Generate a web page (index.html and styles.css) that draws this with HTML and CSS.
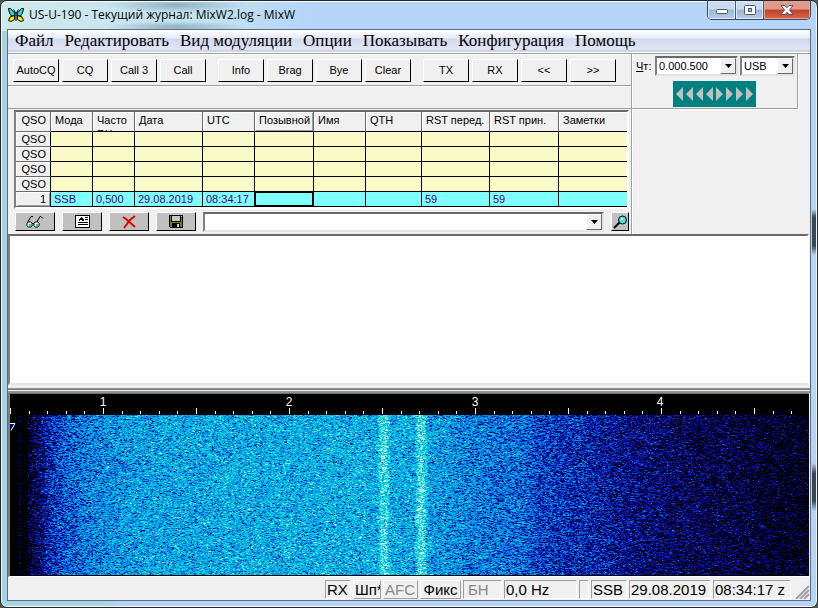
FILE: index.html
```html
<!DOCTYPE html>
<html lang="ru">
<head>
<meta charset="utf-8">
<title>US-U-190 - Текущий журнал: MixW2.log - MixW</title>
<link rel="stylesheet" href="styles.css">
</head>
<body>
<div class="window">
  <header class="titlebar">
    <svg class="app-icon" width="16" height="16" viewBox="0 0 16 16" aria-hidden="true">
      <path d="M.5 1.500h2l4 4.500.5 3H3.500L1.500 6zM15.500 1.500h-2L9.500 6 9 9h3.500l2-3z" fill="#1fe0e0" stroke="#000"/>
      <path d="M6.500 8.500l-4.500 1.500L.5 13.500 3 14.500l3.500-2zM9.500 8.500l4.500 1.500 1.500 3.500-2.500 1-3.500-2z" fill="#f8f000" stroke="#000"/>
      <path d="M5.500 2.500L8 6.500l2.500-4M8 6v8" fill="none" stroke="#000"/>
    </svg>
    <h1 class="caption">US-U-190 - Текущий журнал: MixW2.log - MixW</h1>
    <div class="window-buttons">
      <button class="wb" aria-label="Свернуть"><svg width="14" height="10"><rect x="1.5" y="4.500" width="11" height="4" rx="1" fill="#fff" stroke="#535666"/></svg></button>
      <button class="wb" aria-label="Развернуть"><svg width="14" height="10"><rect x="1.500" y=".5" width="11" height="9" rx="1" fill="#fff" stroke="#535666"/><rect x="5.500" y="3.500" width="3" height="3" fill="#9fb4cf" stroke="#535666"/></svg></button>
      <button class="wb wb-close" aria-label="Закрыть"><svg width="14" height="10"><path d="M1 .5h4l2 2.200 2-2.200h4L9.500 5l3.500 4.500H9L7 7.300 5 9.500H1L4.500 5z" fill="#fff" stroke="#535666"/></svg></button>
    </div>
  </header>

  <main class="client">
    <nav class="menu">
      <a href="#file">Файл</a><a href="#edit">Редактировать</a><a href="#mode">Вид модуляции</a><a href="#options">Опции</a><a href="#view">Показывать</a><a href="#config">Конфигурация</a><a href="#help">Помощь</a>
    </nav>

    <div class="top">
      <section class="left">
        <div class="macros">
          <div class="group"><button>AutoCQ</button><button>CQ</button><button>Call 3</button><button>Call</button></div>
          <div class="group"><button>Info</button><button>Brag</button><button>Bye</button><button>Clear</button></div>
          <div class="group"><button>TX</button><button>RX</button><button>&lt;&lt;</button><button>&gt;&gt;</button></div>
        </div>
        <div class="strip"></div>
        <div class="log">
          <table>
            <colgroup><col class="c-qso"><col class="c-mode"><col class="c-mode"><col class="c-date"><col class="c-utc"><col class="c-call"><col class="c-utc"><col class="c-qth"><col class="c-date"><col class="c-rst"><col></colgroup>
            <thead>
              <tr><th class="no">QSO</th><th>Мода</th><th><div class="clip">Часто<br>RX</div></th><th>Дата</th><th>UTC</th><th class="raised">Позывной</th><th>Имя</th><th>QTH</th><th>RST перед.</th><th>RST прин.</th><th>Заметки</th></tr>
            </thead>
            <tbody>
              <tr><th class="no">QSO</th><td></td><td></td><td></td><td></td><td></td><td></td><td></td><td></td><td></td><td></td></tr>
              <tr><th class="no">QSO</th><td></td><td></td><td></td><td></td><td></td><td></td><td></td><td></td><td></td><td></td></tr>
              <tr><th class="no">QSO</th><td></td><td></td><td></td><td></td><td></td><td></td><td></td><td></td><td></td><td></td></tr>
              <tr><th class="no">QSO</th><td></td><td></td><td></td><td></td><td></td><td></td><td></td><td></td><td></td><td></td></tr>
              <tr class="current"><th class="no raised">1</th><td>SSB</td><td>0,500</td><td>29.08.2019</td><td>08:34:17</td><td class="focus"></td><td></td><td></td><td>59</td><td>59</td><td></td></tr>
            </tbody>
          </table>
        </div>
        <div class="tools">
          <button class="tool" aria-label="Поиск"><svg width="18" height="13" viewBox="0 0 18 13"><path d="M1.500 7.500L5 1.500h2M10.500 7.500L14 1.500h1l2 2" fill="none" stroke="#000"/><path d="M2 7h3l1 1v3l-1 1H2l-1-1V8zM9 7h3l1 1v3l-1 1H9l-1-1V8z" fill="#fff" stroke="#000"/><path d="M3 9h2v2H3zM10 9h2v2h-2z" fill="#00dede"/><path d="M6 8.500h2" stroke="#000"/></svg></button>
          <button class="tool" aria-label="Запись"><svg width="15" height="13" viewBox="0 0 15 13" shape-rendering="crispEdges"><path d="M0 0h15v13H0z" fill="#000"/><path d="M1 1h13v11H1z" fill="#fff"/><path d="M3 6h1V4h1V3h1V2h1v1h1v1h1v2H7V5H5v1zM10 2h3v1h-3zM10 4h3v1h-3zM3 7h10v1H3zM3 9h10v1H3z" fill="#000"/></svg></button>
          <button class="tool" aria-label="Удалить"><svg width="14" height="14" viewBox="0 0 14 14"><path d="M1 2l3 2 9 8M13 1L8 5l-6 8" fill="none" stroke="#e00000" stroke-width="2"/></svg></button>
          <button class="tool" aria-label="Сохранить"><svg width="14" height="13" viewBox="0 0 14 13" shape-rendering="crispEdges"><path d="M0 0h14v13H1l-1-1z" fill="#000"/><path d="M1 1h1v6h10V3h1v9H1z" fill="#808000"/><path d="M3 1h8v5H3z" fill="#c8c8c8"/><path d="M3 8h8v5H3z" fill="#000"/><path d="M8 9h2v3H8z" fill="#d0d0d0"/><path d="M12 1h1v1h-1z" fill="#fff"/></svg></button>
          <div class="combo wide"><input type="text" aria-label="Строка заметок"><button class="drop" aria-label="Список"><svg width="7" height="4"><path d="M0 0h7L3.500 4z"/></svg></button></div>
          <button class="tool find" aria-label="Найти"><svg width="15" height="14" viewBox="0 0 15 14"><path d="M1 13l6-6" stroke="#000" stroke-width="2"/><circle cx="9.500" cy="5" r="4" fill="#3fe4e8" stroke="#000"/><path d="M8 3h2v2H8z" fill="#fff"/></svg></button>
        </div>
      </section>

      <section class="right">
        <div class="tuner">
          <div class="fields">
            <label for="freq"><u>Ч</u>т:</label>
            <div class="combo freq"><select id="freq"><option>0.000.500</option></select><span class="drop"><svg width="7" height="4"><path d="M0 0h7L3.500 4z"/></svg></span></div>
            <div class="combo band"><select aria-label="Модуляция"><option>USB</option></select><span class="drop"><svg width="7" height="4"><path d="M0 0h7L3.500 4z"/></svg></span></div>
          </div>
          <button class="spin" aria-label="Настройка"><svg width="83" height="26" viewBox="0 0 83 26"><path d="M10 6v14L3 13zM20 6v14l-7-7zM30 6v14l-7-7zM40 6v14l-7-7zM43 6v14l7-7zM53 6v14l7-7zM63 6v14l7-7zM73 6v14l7-7z" fill="#c0c0c0"/></svg></button>
        </div>
      </section>
    </div>

    <textarea class="received" aria-label="Принятый текст"></textarea>
    <div class="splitter"></div>

    <section class="spectrum">
      <svg class="ruler" width="100%" height="21">
        <defs>
          <pattern id="ticks" width="186" height="21" patternUnits="userSpaceOnUse">
            <path d="M0 14h1v6H0zM93 14h1v6h-1zM19 17h1v3h-1zM37 17h1v3h-1zM56 17h1v3h-1zM74 17h1v3h-1zM112 17h1v3h-1zM130 17h1v3h-1zM149 17h1v3h-1zM167 17h1v3h-1z" fill="#fff" shape-rendering="crispEdges"/>
          </pattern>
        </defs>
        <rect width="100%" height="21" fill="url(#ticks)"/>
        <text x="93" y="12">1</text><text x="279" y="12">2</text><text x="465" y="12">3</text><text x="650" y="12">4</text>
      </svg>
      <div class="fall">
        <canvas id="waterfall"></canvas>
        <svg class="marker" width="6" height="8"><path d="M0 .5h5L1 7.500" fill="#000090" stroke="#fff"/></svg>
      </div>
    </section>

    <footer class="status">
      <span class="s-rx">RX</span><button class="s-sq">Шп*</button><button class="s-afc off">AFC</button><button class="s-lock">Фикс</button><span class="s-bn off">БН</span><span class="s-hz">0,0 Hz</span><span class="s-gap"></span><span class="s-mode">SSB</span><span class="s-date">29.08.2019</span><span class="s-time">08:34:17 z</span>
      <svg class="grip" width="14" height="14"><path d="M1 14L14 1M5 14l9-9M9 14l5-5" stroke="#a0a0a0" stroke-width="2"/></svg>
    </footer>
  </main>
</div>
<script src="app.js"></script>
</body>
</html>
```
FILE: styles.css
```css
* { box-sizing: border-box; }
body {
  margin: 0;
  background: #4a5a52;
  font: 11px/13px "Liberation Sans", sans-serif;
  color: #000;
}
button, input, select, textarea { font: inherit; color: inherit; margin: 0; border-radius: 0; }
button { padding: 0; }

.window {
  display: flex;
  flex-direction: column;
  min-height: 100vh;
  padding: 0 6px 6px;
  border: 1px solid #22252c;
  border-radius: 7px;
  box-shadow: inset 0 0 0 1px #f4fafd;
  background:
    linear-gradient(transparent 208px, #3a4654 216px, #3a4654 245px, transparent 254px, transparent 462px, #3a4654 472px, #3a4654 500px, transparent 510px) right 0 top 0 / 5px 100% no-repeat,
    radial-gradient(ellipse 70px 8px at 175px 4px, #8fb0c4, transparent) 0 0 / 100% 30px no-repeat,
    radial-gradient(ellipse 70px 6px at 175px 26px, #8fb0c4, transparent) 0 0 / 100% 30px no-repeat,
    linear-gradient(90deg, #cfe9ee, #c4e4ef 200px, #b4d5f8 310px) 0 0 / 100% 30px no-repeat,
    linear-gradient(90deg, #a5d5e4, #a5d5e4 100px, #b4d5f8 120px);
}

.titlebar { display: flex; height: 28px; padding-left: 1px; align-items: center; }
.app-icon { flex: none; margin-right: 5px; }
.caption { flex: 1; margin: 0; font: 12px/16px "Open Sans", sans-serif; white-space: nowrap; }
.window-buttons {
  display: flex;
  align-self: flex-start;
  height: 19px;
  border: 1px solid #3d4656;
  border-top: 0;
  border-radius: 0 0 5px 5px;
  overflow: hidden;
}
.wb {
  display: grid;
  place-items: center;
  width: 28px;
  border: 0;
  border-right: 1px solid #4d5b70;
  box-shadow: inset 0 0 0 1px #dcebfa;
  background: linear-gradient(#c8dbf0 45%, #9cb6d3 50%, #b4d0ee);
}
.wb-close { width: 46px; border-right: 0; box-shadow: inset 0 0 0 1px #e7a597; background: linear-gradient(#e09a88 45%, #c04028 50%, #d4694c); }

.client {
  flex: 1;
  display: flex;
  flex-direction: column;
  border: 1px solid #5f6b78;
  background: #f0f0f0;
}

.menu {
  display: flex;
  gap: 11px;
  height: 24px;
  padding: 1px 7px 0;
  border-bottom: 1px solid #a0a0a0;
  background: linear-gradient(#fff, #e6ebf6 8px, #d3daee 9px, #e1e6f6 20px, #b8bcc8 21px, #f8f8f8 22px);
  font: 17px/20px "Liberation Serif", serif;
}
.menu a { color: #000; text-decoration: none; white-space: nowrap; }

.top { display: flex; }
.left { flex: none; border-right: 1px solid #a0a0a0; box-shadow: 1px 0 #fff; }
.macros { display: flex; gap: 12px; height: 32px; padding: 4px 15px 0 5px; border-top: 1px solid #fff; border-bottom: 1px solid #a0a0a0; }
.group { display: flex; gap: 3px; }
.group button { width: 46px; height: 23px; border: 1px solid #fff; border-right-color: #000; border-bottom-color: #000; background: #f0f0f0; }
.strip { height: 23px; border-top: 1px solid #fff; border-bottom: 1px solid #a0a0a0; }

.log { contain: inline-size; margin: 1px 2px 0 6px; border: 2px solid #696969; border-left-color: #808080; border-right-color: #fff; border-bottom-color: #fff; }
table { width: 100%; table-layout: fixed; border-collapse: separate; border-spacing: 0; }
.c-qso { width: 35px; }
.c-mode { width: 42px; }
.c-date { width: 68px; }
.c-utc { width: 52px; }
.c-call { width: 59px; }
.c-qth { width: 56px; }
.c-rst { width: 69px; }
th, td { height: 15px; padding: 0 3px; border: 0 solid #000; border-width: 0 1px 1px 0; font-weight: normal; line-height: 14px; text-align: left; white-space: nowrap; overflow: hidden; }
th:last-child, td:last-child { border-right: 0; }
th { background: #f0f0f0; }
thead th { height: 20px; padding: 1px 4px 0; border-right-color: #696969; vertical-align: top; box-shadow: inset 1px 1px #fff; }
.clip { height: 18px; white-space: normal; overflow: hidden; }
th.no { padding-right: 4px; text-align: right; border-bottom-color: #696969; box-shadow: inset 1px 1px #fff; }
th.raised { box-shadow: inset 1px 1px #fff, inset -1px -1px #a0a0a0; }
td { background: #fafac8; color: #400080; }
.current td { background: #80ffff; }
.current td.focus { box-shadow: inset 1px 1px #000, inset -1px -1px #000; }

.tools { display: flex; align-items: center; gap: 7px; height: 25px; padding: 0 2px 0 7px; }
.tool { flex: none; display: grid; place-items: center; width: 40px; height: 19px; border: 1px solid #fff; border-right-color: #000; border-bottom-color: #000; background: #c0c0c0; }
.find { width: 18px; }

.combo { display: flex; height: 20px; border: 2px solid #808080; border-top-color: #696969; border-right-color: #e3e3e3; border-bottom-color: #e3e3e3; background: #fff; }
.combo input, .combo select { flex: 1; min-width: 0; padding: 0 2px; border: 0; outline: 0; background: #fff; appearance: none; }
.wide { flex: 1; }
.drop { flex: none; display: grid; place-items: center; width: 16px; border: 1px solid #fff; border-right-color: #696969; border-bottom-color: #696969; background: #f0f0f0; }

.tuner { height: 55px; padding: 2px 2px 0 4px; border-right: 1px solid #a0a0a0; border-bottom: 1px solid #a0a0a0; box-shadow: 1px 1px #fff; }
.fields { display: flex; align-items: center; }
.fields label { width: 19px; }
.freq { width: 83px; margin-right: 2px; }
.band { width: 55px; }
.spin { display: block; width: 83px; height: 26px; margin: 5px auto 0 37px; border: 0; background: #008080; }

.received { display: block; width: calc(100% - 1px); height: 151px; margin: 0; border: 2px solid #696969; border-left-color: #808080; border-right-color: #fff; border-bottom-color: #e3e3e3; background: #fff; resize: none; outline: 0; }
.splitter { height: 8px; border-bottom: 2px solid #909090; background: linear-gradient(#f0f0f0 3px, #a0a0a0 3px, #696969 5px, #f4f4f4 5px); }

.spectrum { flex: 1; display: flex; flex-direction: column; margin-right: 1px; border-left: 2px solid #808080; border-bottom: 1px solid #fff; border-top: 1px solid #696969; background: #000; }
.ruler { flex: none; display: block; }
.ruler text { fill: #fff; font-size: 12px; text-anchor: middle; }
.fall { flex: 1; display: flex; min-height: 160px; position: relative; }
.fall canvas { flex: 1; min-width: 0; width: 100%; height: 160px; }
.marker { position: absolute; left: 0; top: 8px; }

.status { display: flex; gap: 2px; height: 23px; padding: 3px 1px 0 0; justify-content: flex-end; font-size: 15px; line-height: 18px; }
.status span, .status button { height: 19px; padding: 0 1px; border: 1px solid #a0a0a0; border-right-color: #fff; border-bottom-color: #fff; background: none; text-align: left; white-space: nowrap; overflow: hidden; }
.status button { border-color: #fff; border-right-color: #a0a0a0; border-bottom-color: #a0a0a0; }
.status .off { color: #888; }
.status .s-rx { width: 26px; }
.status .s-sq { width: 28px; }
.status .s-afc { width: 35px; }
.status .s-lock { width: 41px; text-align: center; }
.status .s-bn { width: 39px; padding-left: 4px; }
.status .s-hz { width: 73px; }
.status .s-gap { width: 10px; }
.status .s-mode { width: 36px; }
.status .s-date { width: 82px; }
.status .s-time { width: 78px; }
.grip { flex: none; margin: 5px 0 0 2px; }
```
FILE: app.js
```js
// Paints the audio waterfall: average level per frequency plus receiver noise.
const canvas = document.getElementById('waterfall');
const width = canvas.width = canvas.clientWidth;
const height = canvas.height = canvas.clientHeight;
const ctx = canvas.getContext('2d');

// [offset in pixels from the left edge, mean level]
const profile = [[0, -0.5], [8, -0.5], [9, 0.03], [10, 0.03], [11, -0.5], [17, -0.5], [18, 0.03],
  [27, 0.1], [38, 0.28], [60, 0.42], [90, 0.5], [150, 0.58], [300, 0.6], [367, 0.6],
  [371, 0.8], [376, 0.8], [380, 0.6], [404, 0.58], [408, 0.8], [413, 0.8], [418, 0.56],
  [460, 0.48], [510, 0.43], [530, 0.34], [580, 0.27], [620, 0.18], [660, 0.12], [720, 0.07],
  [760, 0.02], [798, -0.02]];

// [level, r, g, b]
const palette = [[0, 0, 0, 0], [0.15, 0, 0, 130], [0.3, 0, 40, 190], [0.45, 0, 120, 220],
  [0.6, 0, 180, 225], [0.72, 0, 210, 222], [0.86, 110, 228, 222], [1, 235, 250, 240]];

function interpolate(table, x, column) {
  if (x <= table[0][0]) return table[0][column];
  for (let i = 1; i < table.length; i++) {
    if (x <= table[i][0]) {
      const a = table[i - 1], b = table[i];
      return a[column] + (b[column] - a[column]) * (x - a[0]) / (b[0] - a[0]);
    }
  }
  return table[table.length - 1][column];
}

let seed = 190;
function random() {
  seed = (Math.imul(seed, 1664525) + 1013904223) >>> 0;
  return seed / 4294967296;
}

const levels = Array.from({ length: width }, (_, x) => interpolate(profile, x, 1));
const image = ctx.createImageData(width, height);
for (let y = 0; y < height; y++) {
  let previous = 0;
  for (let x = 0; x < width; x++) {
    const fresh = random() + random() + random() - 1.5;
    const noise = previous * 0.5 + fresh * 0.85;
    previous = fresh;
    let level = levels[x] + noise * 0.26;
    if (levels[x] > 0.2 && random() < 0.03) level -= 0.35;
    const p = (y * width + x) * 4;
    for (let c = 0; c < 3; c++) image.data[p + c] = interpolate(palette, level, c + 1);
    image.data[p + 3] = 255;
  }
}
ctx.putImageData(image, 0, 0);
```
